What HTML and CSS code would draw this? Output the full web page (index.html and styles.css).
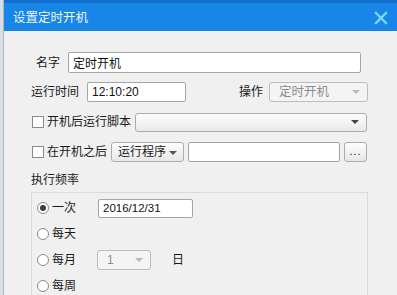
FILE: index.html
```html
<!DOCTYPE html>
<html lang="zh-CN">
<head>
  <meta charset="UTF-8">
  <title>设置定时开机</title>
  <link rel="stylesheet" href="styles.css">
</head>
<body>
  <div class="dialog">
    <div class="titlebar">
      <span class="title">设置定时开机</span>
      <svg class="close" width="14" height="14" viewBox="0 0 14 14">
        <path d="M2 2 L12 12 M12 2 L2 12" stroke="#7fd4f4" stroke-width="2.4" stroke-linecap="square"/>
      </svg>
    </div>

    <div class="content">
      <div class="row row-name">
        <label>名字</label>
        <input type="text" class="field name-field" value="定时开机">
      </div>

      <div class="row row-time">
        <label>运行时间</label>
        <input type="text" class="field time-field" value="12:10:20">
        <div class="op">
          <label>操作</label>
          <div class="select disabled op-select"><span>定时开机</span><i class="arrow"></i></div>
        </div>
      </div>

      <div class="row row-check">
        <span class="checkbox"></span>
        <label>开机后运行脚本</label>
        <div class="select script-select"><span></span><i class="arrow"></i></div>
      </div>

      <div class="row row-check">
        <span class="checkbox"></span>
        <label>在开机之后</label>
        <div class="button run-btn">运行程序<i class="arrow"></i></div>
        <input type="text" class="field path-field" value="">
        <div class="button browse-btn">...</div>
      </div>

      <div class="section-label">执行频率</div>

      <div class="group">
        <div class="radio-row">
          <div class="radio-opt"><span class="radio checked"></span>一次</div>
          <input type="text" class="field date-field" value="2016/12/31">
        </div>
        <div class="radio-row">
          <div class="radio-opt"><span class="radio"></span>每天</div>
        </div>
        <div class="radio-row">
          <div class="radio-opt"><span class="radio"></span>每月</div>
          <div class="select disabled day-select"><span>1</span><i class="arrow"></i></div>
          <span class="unit">日</span>
        </div>
        <div class="radio-row">
          <div class="radio-opt"><span class="radio"></span>每周</div>
        </div>
      </div>
    </div>
  </div>
</body>
</html>
```

FILE: styles.css
```css
html, body {
  margin: 0;
  height: 100%;
  overflow: hidden;
}
body {
  background: #d7dde4;
  font-family: "Liberation Sans", "Noto Sans CJK SC", sans-serif;
  font-size: 12px;
  color: #1a1a1a;
}
.dialog {
  margin-left: 3px;
  height: 100%;
  background: #f0f0f0;
  border-left: 1px solid #b4b4b4;
}
.titlebar {
  height: 28px;
  border-top: 3px solid #1470cf;
  background: #1886e6;
  display: flex;
  align-items: center;
  justify-content: space-between;
  padding: 0 9px 0 9px;
}
.title {
  color: #eef6ff;
  font-size: 12.5px;
  line-height: 16px;
  margin-top: 2px;
}
.close {
  margin-top: 2px;
}
.content {
  padding-top: 21px;
}
.row {
  display: flex;
  align-items: center;
  height: 20px;
  margin-bottom: 10px;
}
label {
  line-height: 16px;
  white-space: nowrap;
}
.field {
  box-sizing: border-box;
  height: 20px;
  margin: 0;
  padding: 0 4px;
  border: 1px solid #a5a5a5;
  border-radius: 2px;
  background: #fff;
  font-family: "Liberation Sans", "Noto Sans CJK SC", sans-serif;
  font-size: 12px;
  color: #111;
  outline: none;
}
.row-name {
  padding-left: 32px;
  gap: 8px;
  height: 21px;
  margin-bottom: 9px;
}
.name-field {
  width: 293px;
  height: 21px;
}
.row-time {
  padding-left: 27px;
  padding-right: 29px;
  gap: 8px;
}
.time-field {
  width: 99px;
}
.op {
  margin-left: auto;
  display: flex;
  align-items: center;
  gap: 6px;
}
.select {
  box-sizing: border-box;
  height: 20px;
  display: flex;
  align-items: center;
  justify-content: space-between;
  padding: 0 7px 0 9px;
  border: 1px solid #acacac;
  border-radius: 3px;
  background: linear-gradient(#fdfdfd, #e9e9e9);
}
.select span {
  line-height: 16px;
}
.arrow {
  width: 0;
  height: 0;
  border-left: 4px solid transparent;
  border-right: 4px solid transparent;
  border-top: 4px solid #444;
}
.select.disabled {
  background: #f4f4f4;
  border-color: #bcbcbc;
  color: #8c8c8c;
}
.select.disabled .arrow {
  border-top-color: #b8b8b8;
}
.op-select {
  width: 99px;
  font-size: 12.5px;
}
.row-check {
  padding-left: 28px;
  gap: 4px;
}
.checkbox {
  box-sizing: border-box;
  width: 12px;
  height: 12px;
  border: 1px solid #8a8a8a;
  background: #fff;
  margin-right: -1px;
}
.script-select {
  width: 232px;
  height: 19px;
}
.button {
  box-sizing: border-box;
  height: 20px;
  display: flex;
  align-items: center;
  justify-content: center;
  border: 1px solid #acacac;
  border-radius: 3px;
  background: linear-gradient(#fdfdfd, #e7e7e7);
  line-height: 16px;
}
.run-btn {
  width: 73px;
  gap: 3px;
}
.run-btn .arrow {
  border-top-color: #555;
  margin-top: 1px;
}
.path-field {
  width: 152px;
}
.browse-btn {
  width: 23px;
  font-size: 11px;
  letter-spacing: 1px;
  padding-bottom: 3px;
}
.section-label {
  padding-left: 27px;
  line-height: 16px;
  margin-top: 8px;
}
.group {
  margin: 4px 0 0 27px;
  width: 337px;
  height: 105px;
  box-sizing: border-box;
  border: 1px solid #dadada;
  border-bottom: none;
  padding: 2px 0 0 5px;
}
.radio-row {
  height: 26px;
  display: flex;
  align-items: center;
}
.radio-opt {
  width: 61px;
  display: flex;
  align-items: center;
  gap: 3px;
  line-height: 16px;
}
.radio {
  box-sizing: border-box;
  width: 12px;
  height: 12px;
  border: 1px solid #8a8a8a;
  border-radius: 50%;
  background: #fff;
  display: flex;
  align-items: center;
  justify-content: center;
}
.radio.checked::after {
  content: "";
  width: 6px;
  height: 6px;
  border-radius: 50%;
  background: #3c3c3c;
}
.date-field {
  width: 95px;
  height: 19px;
  font-size: 11.5px;
}
.day-select {
  width: 54px;
  margin-left: -1px;
}
.unit {
  margin-left: 21px;
  line-height: 16px;
}
```
